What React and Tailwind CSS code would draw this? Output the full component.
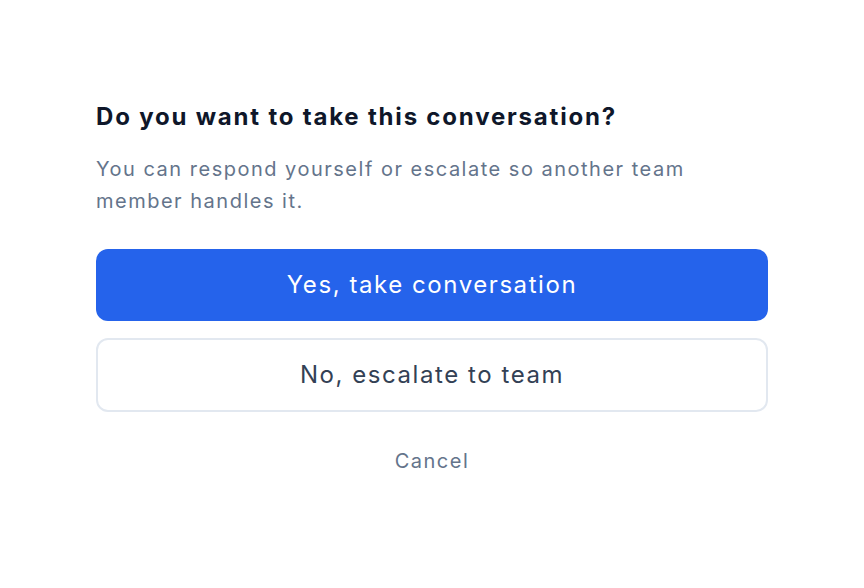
export default function App() {
  return (
    <div className="min-h-[588px] w-full bg-white font-['Inter',sans-serif]">
      <div className="mx-auto w-[672px] pt-[101px]">
        <h2 className="text-[24px] font-bold leading-8 tracking-[0.075em] text-[#0f172a]">
          Do you want to take this conversation?
        </h2>
        <p className="mt-5 text-[20px] leading-8 tracking-[0.075em] text-[#64748b]">
          You can respond yourself or escalate so another team member handles it.
        </p>

        <div className="mt-8 flex flex-col gap-[17px]">
          <button className="h-[72px] w-full rounded-xl bg-[#2563eb] text-[24px] tracking-[0.065em] text-white">
            Yes, take conversation
          </button>
          <button className="h-[74px] w-full rounded-xl border-2 border-[#e2e8f0] bg-white text-[24px] tracking-[0.065em] text-[#334155]">
            No, escalate to team
          </button>
        </div>

        <div className="mt-[35px] text-center">
          <button className="text-[20px] leading-7 tracking-[0.075em] text-[#64748b]">
            Cancel
          </button>
        </div>
      </div>
    </div>
  );
}
